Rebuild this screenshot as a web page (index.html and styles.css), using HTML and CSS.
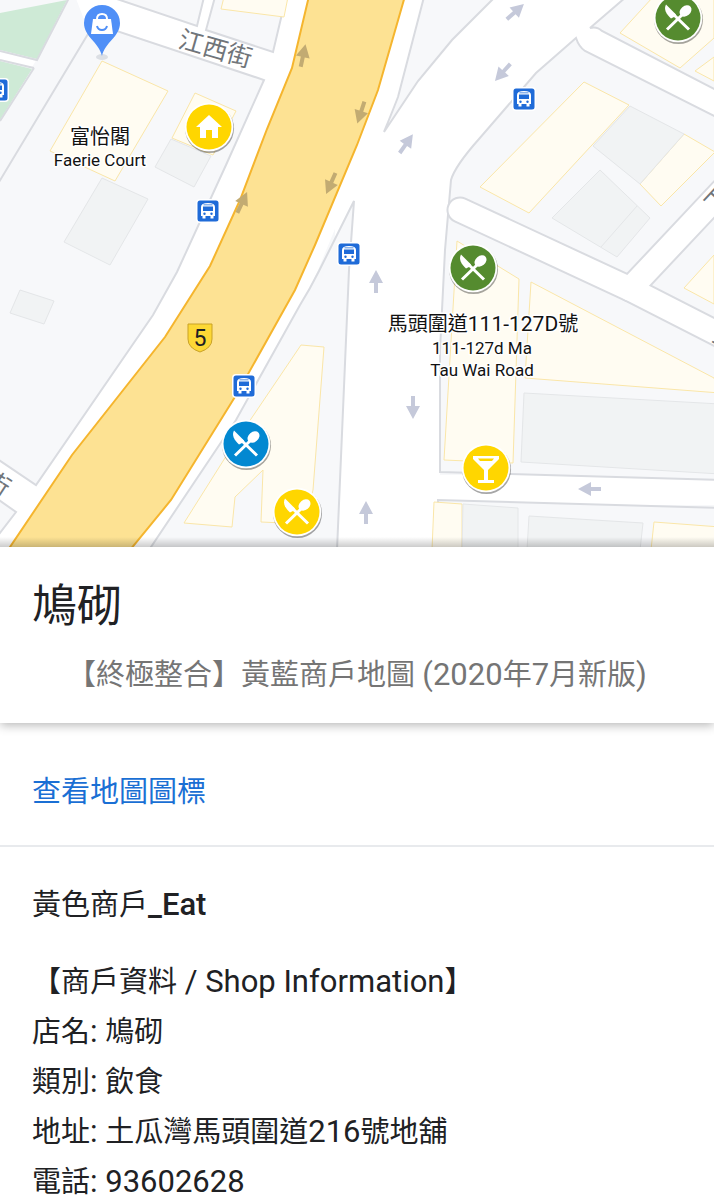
FILE: index.html
```html
<!DOCTYPE html>
<html lang="zh-Hant">
<head>
<meta charset="utf-8">
<meta name="viewport" content="width=device-width, initial-scale=1">
<title>鳩砌</title>
<link rel="stylesheet" href="styles.css">
</head>
<body>
<main class="page">
<svg class="map" viewBox="0 0 714 547" role="img" aria-label="地圖">
  <defs>
    <linearGradient id="shade" x1="0" y1="0" x2="0" y2="1">
      <stop offset="0" stop-color="#000" stop-opacity="0"/>
      <stop offset="1" stop-color="#000" stop-opacity=".2"/>
    </linearGradient>
    <g id="bus">
      <rect class="halo" x="-12" y="-12" width="24" height="24" rx="4"/>
      <rect class="bus-bg" x="-10.500" y="-10.500" width="21" height="21" rx="2.500"/>
      <path class="white" d="M-7 5V-4Q-7-8 0-8T7-4V5H5.500V7.500H2.500V5H-2.500V7.500H-5.500V5Z"/>
      <path class="bus-bg" d="M-5-4.500H5V0H-5ZM-4.500-6.500H4.500V-5.800H-4.500Z"/>
      <circle class="bus-bg" cx="-3.500" cy="2.800" r="1.200"/><circle class="bus-bg" cx="3.500" cy="2.800" r="1.200"/>
    </g>
    <g id="disc-base">
      <circle class="disc-shadow" cx=".5" cy="1.500" r="24.500"/>
      <circle class="halo" r="24.300"/>
      <circle r="22.500"/>
    </g>
    <g id="cutlery">
      <path class="white" d="M-12-13.500C-14.500-9-12-4-7 .5L-4-1-2-3.500Z"/>
      <path class="tool" d="M-5-4 11 11.500M-11 11.500 5-4"/>
      <ellipse class="white" cx="7.500" cy="-7" rx="6.600" ry="5" transform="rotate(-40 7.500 -7)"/>
    </g>
    <path id="arrow" d="M0-12 7 1H2V11H-2V1H-7Z"/>
  </defs>
  <rect class="land" width="714" height="547"/>

  <path class="road" d="M75-4H304V90L36 500 0 470V183L0 51 36 61ZM0 183 90 35 75-4 0 120ZM0 451 60 470 10 547H0Z"/>
  <path class="land" d="M0 0H69L36 60 0 51ZM0 60 34 68 0 121Z"/>
  <path class="park" d="M0 13 67 0 37 59 0 50ZM0 61 32 69 0 120Z"/>
  <path class="edge" d="M70-4 37 60 0 51M34 68 0 121M0 60 34 68"/>
  <path class="road" d="M286-3 216 170 110 370 5 547H150L250 410 318 270 380 120 426 0V-3Z"/>
  <path class="road" d="M390-3 355 132 335 200 336 547H470L440 512V505H714V475H440L446 270 451 180 480 138 570 55 720 130V75L595 25 650-3Z"/>

  <path class="block" d="M-4 187 88 34 102 26 264 80 226 165 177 272 153 315 36 485-4 458Z"/>
  <path class="block" d="M111-3 197 26 204-3ZM215-3 206 30 273 52 286-3Z"/>
  <path class="block" d="M-4 498 16 512-4 538Z"/>
  <path class="block" d="M424-3 398 97Q393 110 384 132L418 81 452 40 495-3Z"/>
  <path class="block" d="M354 201 319 271Q310 289 300 305L236 420 149 550H337L349 270Z"/>
  <path class="block" d="M440 472V350L445 250 451 180Q455 166 479 139L536 73 576 38Q579 47 585 51L720 119V480L510 474Z"/>
  <path class="block" d="M438 550V500L720 508V550Z"/>
  <path class="block" d="M590 28 626-3H720V92L602 31Q597 26 590 28Z"/>
  <path class="road-line" d="M460 210 630 289 724 337"/>
  <path class="road-line" d="M630 289 724 189"/>
  <path class="road-fill" d="M460 210 630 289 724 337"/>
  <path class="road-fill" d="M630 289 724 189"/>

  <path class="main-road" d="M309-4 292 68 267 129 240 200 210 266 165 337 72 455 8 550H130L171 500 238 392 295 290 315 245 357 145 378 90 405-4Z"/>

  <g class="shop">
    <path d="M102 61 168 91 115 181 50 151ZM195 93 236 111 213 155 172 138ZM224-3 221 9 284 17 288-3Z"/>
    <path d="M584 82 629 105 529 213 480 187ZM684 134 715 152 661 206 640 184ZM653-3 620 33 680 68 714 38V-3ZM714 57 695 71 714 81Z"/>
    <path d="M457 241 519 279 513 463 444 460ZM531 282 714 378 720 393 525 378ZM714 255 684 288 714 304Z"/>
    <path d="M301 345 324 347 313 490 305 524 261 522 263 470 235 497 232 527 184 523 230 450Z"/>
    <path d="M434 502 462 504V550H432ZM654 522 720 527V550H651Z"/>
  </g>
  <g class="building">
    <path d="M102 178 148 199 110 265 64 242ZM171 139 211 156 194 187 155 167ZM20 290 54 301 44 324 10 313Z"/>
    <path d="M630 106 684 134 640 184 593 146ZM600 170 650 218 617 257 552 218ZM637 206 601 247"/>
    <path d="M524 393 720 404V474L521 462ZM463 504 518 508V550H462ZM529 516 643 523 640 550H527Z"/>
  </g>

  <g class="arrow-main">
    <use href="#arrow" transform="translate(303 56) rotate(12)"/>
    <use href="#arrow" transform="translate(361 112) rotate(198)"/>
    <use href="#arrow" transform="translate(331 183) rotate(204)"/>
    <use href="#arrow" transform="translate(242 203) rotate(25)"/>
  </g>
  <g class="arrow-side">
    <use href="#arrow" transform="translate(406 144) rotate(35)"/>
    <use href="#arrow" transform="translate(515 12) rotate(48)"/>
    <use href="#arrow" transform="translate(503 72) rotate(222)"/>
    <use href="#arrow" transform="translate(376 282)"/>
    <use href="#arrow" transform="translate(413 407) rotate(180)"/>
    <use href="#arrow" transform="translate(366 513)"/>
    <use href="#arrow" transform="translate(590 489) rotate(270)"/>
  </g>

  <text class="street" transform="translate(177 47) rotate(16)">江西街</text>
  <text class="street" transform="translate(-18 484) rotate(33)">街</text>
  <text class="street" transform="translate(716 214) rotate(-47)">下</text>
  <text class="street" transform="translate(711 341) rotate(27)">土</text>

  <ellipse class="pin-shadow" cx="102" cy="57" rx="6" ry="3"/>
  <path class="pin" d="M102 56C99 42 84 37 84 23A18 18 0 0 1 120 23C120 37 105 42 102 56Z"/>
  <path class="white" d="M93 19H111L113 34H91Z"/>
  <path class="bag-handle" d="M97 21V19Q97 14 102 14T107 19V21"/>
  <path class="bag-smile" d="M97 26Q98 30 102 30T107 26"/>

  <use href="#bus" x="-3" y="90"/><use href="#bus" x="208" y="211"/><use href="#bus" x="349" y="254"/><use href="#bus" x="524" y="99"/><use href="#bus" x="244" y="386"/>

  <path class="shield" d="M188 324H212V339Q212 348 200 352Q188 348 188 339Z"/>
  <text class="route" x="200" y="346">5</text>

  <g class="yellow" transform="translate(209 127)"><use href="#disc-base"/><path class="white" d="M0-12 13 0H9V11H3V3H-3V11H-9V0H-13Z"/></g>
  <g class="green" transform="translate(678 18)"><use href="#disc-base"/><use href="#cutlery"/></g>
  <g class="green" transform="translate(473 268)"><use href="#disc-base"/><use href="#cutlery"/></g>
  <g class="blue" transform="translate(246 444)"><use href="#disc-base"/><use href="#cutlery"/></g>
  <g class="yellow" transform="translate(297 512)"><use href="#disc-base"/><use href="#cutlery"/></g>
  <g class="yellow" transform="translate(486 468)"><use href="#disc-base"/><path class="white" fill-rule="evenodd" d="M-13-12H13V-9L2 2V12H8V15H-8V12H-2V2L-13-9ZM-8-9.500-6-7H6L8-9.500Z"/></g>

  <text class="place" x="100" y="144">富怡閣</text>
  <text class="place-sub" x="100" y="166">Faerie Court</text>
  <text class="place" x="483" y="331">馬頭圍道<tspan class="place-latin">111-127D</tspan>號</text>
  <text class="place-sub" x="482" y="354">111-127d Ma</text>
  <text class="place-sub" x="482" y="376">Tau Wai Road</text>
  <rect y="537" width="714" height="10" fill="url(#shade)"/>
</svg>

<header class="heading">
  <h1 class="title">鳩砌</h1>
  <p class="subtitle">【終極整合】黃藍商戶地圖 <span class="latin">(2020</span>年<span class="latin">7</span>月新版<span class="latin">)</span></p>
</header>
<nav class="legend"><a class="legend-link" href="#details">查看地圖圖標</a></nav>
<section class="details" id="details">
  <h2 class="category">黃色商戶<strong class="category-en latin">_Eat</strong></h2>
  <p class="info">【商戶資料<span class="latin"> / Shop Information</span>】<br>店名<span class="latin">: </span>鳩砌<br>類別<span class="latin">: </span>飲食<br>地址<span class="latin">: </span>土瓜灣馬頭圍道<span class="latin">216</span>號地舖<br>電話<span class="latin">: 93602628</span></p>
</section>
</main>
</body>
</html>
```
FILE: styles.css
```css
body {
  margin: 0;
  background: #fff;
  color: #202124;
  font-family: Roboto, "Noto Sans CJK TC", sans-serif;
  font-size: 29px;
}

.page { overflow: hidden; }

.map { display: block; width: 100%; height: auto; }

.land { fill: #f7f8fa; }
.park { fill: #ceead6; }
.road { fill: #fff; }
.block { fill: #f7f8fa; stroke: #d9dbe0; stroke-width: 2; }
.edge { fill: none; stroke: #d9dbe0; stroke-width: 2; }
.road-line, .road-fill { fill: none; stroke-linecap: round; stroke-linejoin: round; }
.road-line { stroke: #d9dbe0; stroke-width: 27; }
.road-fill { stroke: #fff; stroke-width: 23; }
.main-road { fill: #fde293; stroke: #f5b52e; stroke-width: 2; }
.shop { fill: #fffcf2; stroke: #fae6a8; stroke-width: 1; }
.building { fill: #f1f3f4; stroke: #e4e6e8; stroke-width: 1; }
.arrow-main { fill: #c2ab72; }
.arrow-side { fill: #c5c9da; }

.halo, .white { fill: #fff; }
.bus-bg { fill: #1f6bd8; }
.disc-shadow { fill: #000; opacity: .35; }
.yellow { fill: #ffd600; }
.green { fill: #558b2f; }
.blue { fill: #0288d1; }
.tool { fill: none; stroke: #fff; stroke-width: 3; }
.pin { fill: #4f8ff7; }
.pin-shadow { fill: #dcdfe4; }
.bag-handle { fill: none; stroke: #fff; stroke-width: 2; }
.bag-smile { fill: none; stroke: #4f8ff7; stroke-width: 2; }
.shield { fill: #fdd835; stroke: #c9a227; stroke-width: 1; }

.route { font-size: 23px; text-anchor: middle; fill: #202124; }
.street { font-size: 25px; fill: #70757a; }
.place, .place-sub {
  text-anchor: middle;
  fill: #111;
  stroke: #fff;
  stroke-width: 3;
  stroke-linejoin: round;
  paint-order: stroke;
}
.place { font-size: 20px; }
.place-latin { font-size: 21px; }
.place-sub { font-size: 17px; }

.heading {
  position: relative;
  padding: 24px 32px 22px;
  background: #fff;
  box-shadow: 0 2px 10px rgba(0, 0, 0, .3);
  clip-path: inset(0 0 -16px 0);
}
.title { margin: 0; font-size: 45px; line-height: 72px; font-weight: 400; }
.subtitle { margin: 0; padding-top: 6px; color: #757575; line-height: 52px; text-align: center; }
.latin { font-size: 31px; line-height: 1; }

.legend { padding: 44px 32px 28px; border-bottom: 2px solid #e8eaed; line-height: 50px; }
.legend-link { color: #1a6fd4; text-decoration: none; }

.details { padding: 33px 32px 0; line-height: 50px; }
.category { margin: 0 0 27px; font-size: 29px; font-weight: 400; }
.category-en { font-weight: 500; }
.info { margin: 0; }
```
